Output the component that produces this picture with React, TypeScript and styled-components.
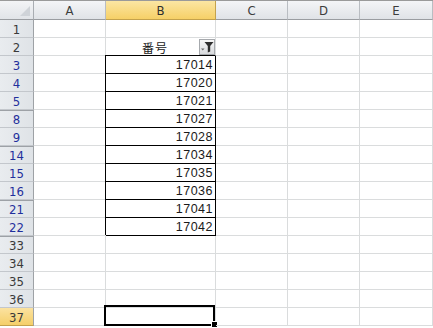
import React from "react";
import styled, { createGlobalStyle, css } from "styled-components";

const Global = createGlobalStyle`
  html, body { margin: 0; padding: 0; background: #ffffff; }
  body { width: 433px; height: 328px; overflow: hidden; }
`;

const Sheet = styled.div`
  display: grid;
  grid-template-columns: 34px 72px 110px 72px 72px 73px;
  grid-auto-rows: 18px;
  grid-template-rows: 19px;
  border-top: 1px solid #9a9a9a;
  width: 433px;
  box-sizing: border-box;
  background: #ffffff;
`;

const headerFont = css`
  font-family: "Liberation Sans Narrow", "DejaVu Sans Condensed", "Liberation Sans", sans-serif;
  font-size: 13px;
`;

const Corner = styled.div`
  box-sizing: border-box;
  border-right: 1px solid #a9adb2;
  border-bottom: 1px solid #9a9da1;
  background: linear-gradient(#f3f4f6, #e1e4e8);
  position: relative;
  &::after {
    content: "";
    position: absolute;
    right: 3px;
    bottom: 3px;
    width: 0;
    height: 0;
    border-left: 10px solid transparent;
    border-bottom: 10px solid #cfd3d8;
  }
`;

const ColHead = styled.div<{ $active?: boolean }>`
  ${headerFont};
  box-sizing: border-box;
  display: flex;
  align-items: center;
  justify-content: center;
  padding-top: 1px;
  border-right: 1px solid ${(p) => (p.$active ? "#c4a24c" : "#b9bdc2")};
  border-bottom: 1px solid ${(p) => (p.$active ? "#c4a24c" : "#9a9da1")};
  background: ${(p) =>
    p.$active ? "linear-gradient(#fbe6a3, #f6d067)" : "linear-gradient(#f4f5f7, #e0e3e7)"};
  color: ${(p) => (p.$active ? "#2e2e2e" : "#3c3c3c")};
`;

const RowHead = styled.div<{ $filtered?: boolean; $gapAbove?: boolean; $active?: boolean }>`
  ${headerFont};
  box-sizing: border-box;
  display: flex;
  align-items: center;
  justify-content: center;
  padding-top: 1px;
  border-right: 1px solid #9ea2a6;
  border-bottom: 1px solid ${(p) => (p.$active ? "#c4a24c" : "#c3c7cc")};
  background: ${(p) =>
    p.$active ? "linear-gradient(#fbe2a0, #f5cf69)" : "linear-gradient(90deg, #e9ecef, #dfe3e7)"};
  color: ${(p) => (p.$filtered ? "#1f2f9c" : "#3a3a3a")};
  ${(p) => p.$gapAbove && css`box-shadow: inset 0 1px 0 #9da1a6;`}
`;

const Cell = styled.div<{ $boxed?: boolean; $selected?: boolean }>`
  box-sizing: border-box;
  position: relative;
  border-right: 1px solid ${(p) => (p.$boxed ? "#000" : "#dadcdd")};
  border-bottom: 1px solid ${(p) => (p.$boxed ? "#000" : "#dadcdd")};
  ${(p) => p.$boxed && css`box-shadow: -1px -1px 0 #000;`}
`;

const NumberCell = styled(Cell)`
  display: flex;
  align-items: flex-end;
  justify-content: flex-end;
  padding: 0 2px 1px 0;
  font-family: "Liberation Sans", Arial, sans-serif;
  font-size: 12.5px;
  letter-spacing: 0.5px;
  line-height: 14px;
  color: #1a1a1a;
`;

const TitleCell = styled(Cell)`
  display: flex;
  align-items: center;
  border-bottom-color: #000;
`;

const Title = styled.span`
  flex: 1;
  text-align: center;
  padding-left: 5px;
  padding-top: 2px;
  font-family: "Noto Sans CJK JP", sans-serif;
  font-size: 12px;
  letter-spacing: 1px;
  color: #1a1a1a;
`;

const FilterButton = styled.div`
  box-sizing: border-box;
  width: 16px;
  height: 16px;
  border: 1px solid #a6a9ad;
  background: linear-gradient(#f7f7f7, #d9dbde);
  display: flex;
  align-items: center;
  justify-content: center;
`;

const SelectionFrame = styled.div`
  position: absolute;
  left: -2px;
  top: -3px;
  right: 0px;
  bottom: -1px;
  border: 2px solid #000;
  pointer-events: none;
`;

const FillHandle = styled.div`
  position: absolute;
  right: -3px;
  bottom: -3px;
  width: 5px;
  height: 5px;
  background: #000;
  border: 1px solid #fff;
`;

const FilterIcon = () => (
  <svg width="14" height="14" viewBox="0 0 14 14">
    <polygon points="1,8.5 4.5,8.5 2.75,10.5" fill="#6a6a6a" />
    <polygon points="4.5,2 13.5,2 10.2,6 10.2,11.5 7.8,12.5 7.8,6" fill="#2f2f2f" />
  </svg>
);

type Row = { n: number; v?: number; filtered?: boolean; gapAbove?: boolean };

const rows: Row[] = [
  { n: 1 },
  { n: 2 },
  { n: 3, v: 17014, filtered: true },
  { n: 4, v: 17020, filtered: true },
  { n: 5, v: 17021, filtered: true },
  { n: 8, v: 17027, filtered: true, gapAbove: true },
  { n: 9, v: 17028, filtered: true },
  { n: 14, v: 17034, filtered: true, gapAbove: true },
  { n: 15, v: 17035, filtered: true },
  { n: 16, v: 17036, filtered: true },
  { n: 21, v: 17041, filtered: true, gapAbove: true },
  { n: 22, v: 17042, filtered: true },
  { n: 33, gapAbove: true },
  { n: 34 },
  { n: 35 },
  { n: 36 },
  { n: 37 },
];

export default function App() {
  return (
    <>
      <Global />
      <Sheet>
        <Corner />
        <ColHead>A</ColHead>
        <ColHead $active>B</ColHead>
        <ColHead>C</ColHead>
        <ColHead>D</ColHead>
        <ColHead>E</ColHead>
        {rows.map((r) => {
          const active = r.n === 37;
          return (
            <React.Fragment key={r.n}>
              <RowHead $filtered={r.filtered} $gapAbove={r.gapAbove} $active={active}>
                {r.n}
              </RowHead>
              <Cell />
              {r.n === 2 ? (
                <TitleCell>
                  <Title>番号</Title>
                  <FilterButton>
                    <FilterIcon />
                  </FilterButton>
                </TitleCell>
              ) : r.v !== undefined ? (
                <NumberCell $boxed>{r.v}</NumberCell>
              ) : active ? (
                <Cell>
                  <SelectionFrame />
                  <FillHandle />
                </Cell>
              ) : (
                <Cell />
              )}
              <Cell />
              <Cell />
              <Cell />
            </React.Fragment>
          );
        })}
      </Sheet>
    </>
  );
}
